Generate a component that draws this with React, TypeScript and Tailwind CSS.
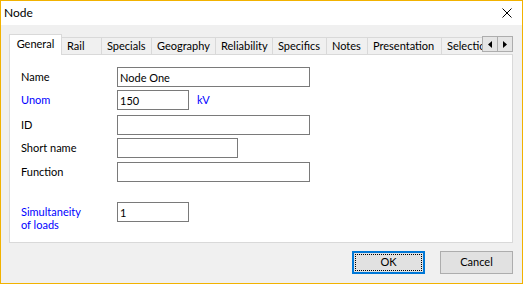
import React from "react";

const TABS = [
  { label: "Rail", w: "w-[40px]" },
  { label: "Specials", w: "w-[50px]" },
  { label: "Geography", w: "w-[64px]" },
  { label: "Reliability", w: "w-[57px]" },
  { label: "Specifics", w: "w-[54px]" },
  { label: "Notes", w: "w-[41px]" },
  { label: "Presentation", w: "w-[74px]" },
];

function Field({ value = "", w }: { value?: string; w: string }) {
  return (
    <input
      readOnly
      value={value}
      className={`${w} h-[20px] border border-[#7a7a7a] bg-white px-[2px] text-[11px] text-black outline-none font-[Lato,sans-serif]`}
    />
  );
}

function Arrow({ dir }: { dir: "l" | "r" }) {
  return (
    <div className="w-[16px] h-[16px] border border-[#adadad] bg-[#e5e5e5] flex items-center justify-center first:ml-0 -ml-px">
      <svg width="4" height="7" viewBox="0 0 4 7">
        {dir === "l" ? <path d="M4 0 L0 3.5 L4 7 Z" fill="#000" /> : <path d="M0 0 L4 3.5 L0 7 Z" fill="#000" />}
      </svg>
    </div>
  );
}

export default function App() {
  return (
    <div className="w-[523px] h-[284px] border border-[#f2b200] bg-[#f0f0f0] flex flex-col font-[Lato,sans-serif] text-[11px] text-black overflow-hidden">
      {/* Title bar */}
      <div className="h-[24px] bg-white flex items-center justify-between pl-[3px] pr-[10px]">
        <span className="text-[12px]">Node</span>
        <svg width="10" height="10" viewBox="0 0 10 10">
          <path d="M0.5 0.5 L9.5 9.5 M9.5 0.5 L0.5 9.5" stroke="#000" strokeWidth="1" />
        </svg>
      </div>

      <div className="pl-[8px] pt-[9px]">
        {/* Tab strip */}
        <div className="flex items-end h-[20px] w-[504px]">
          <div className="relative z-10 w-[53px] h-[21px] -mb-px border border-b-0 border-[#d9d9d9] bg-white flex items-center justify-center pb-[2px]">
            General
          </div>
          {TABS.map((t) => (
            <div
              key={t.label}
              className={`${t.w} h-[17px] border-t border-r border-[#d9d9d9] bg-[#f0f0f0] flex items-center pl-[5px] whitespace-nowrap`}
            >
              {t.label}
            </div>
          ))}
          <div className="w-[40px] h-[17px] border-t border-[#d9d9d9] bg-[#f0f0f0] flex items-center pl-[5px] overflow-hidden whitespace-nowrap">
            Selection
          </div>
          <div className="self-start mt-[2px] flex">
            <Arrow dir="l" />
            <Arrow dir="r" />
          </div>
        </div>

        {/* Panel */}
        <div className="w-[504px] h-[189px] border border-[#d9d9d9] bg-white pl-[11px] pt-[12px] flex flex-col">
          <div className="flex items-center">
            <div className="w-[96px]">Name</div>
            <Field value="Node One" w="w-[193px]" />
          </div>
          <div className="flex items-center mt-[3px]">
            <div className="w-[96px] text-[#0000ff]">Unom</div>
            <Field value="150" w="w-[72px]" />
            <span className="ml-[8px] text-[#0000ff]">kV</span>
          </div>
          <div className="flex items-center mt-[5px]">
            <div className="w-[96px]">ID</div>
            <Field w="w-[193px]" />
          </div>
          <div className="flex items-center mt-[3px]">
            <div className="w-[96px]">Short name</div>
            <Field w="w-[121px]" />
          </div>
          <div className="flex items-center mt-[4px]">
            <div className="w-[96px]">Function</div>
            <Field w="w-[193px]" />
          </div>
          <div className="flex items-start mt-[20px]">
            <div className="w-[96px] text-[#0000ff] leading-[13px] pt-[3px]">
              Simultaneity
              <br />
              of loads
            </div>
            <Field value="1" w="w-[72px]" />
          </div>
        </div>

        {/* Buttons */}
        <div className="w-[504px] flex justify-end gap-[15px] mt-[8px]">
          <button className="relative w-[73px] h-[23px] border-2 border-[#0078d7] bg-[#e1e1e1] flex items-center justify-center">
            <span className="absolute inset-[1px] border border-dotted border-black" />
            OK
          </button>
          <button className="w-[73px] h-[23px] border border-[#adadad] bg-[#e1e1e1] flex items-center justify-center">
            Cancel
          </button>
        </div>
      </div>
    </div>
  );
}
